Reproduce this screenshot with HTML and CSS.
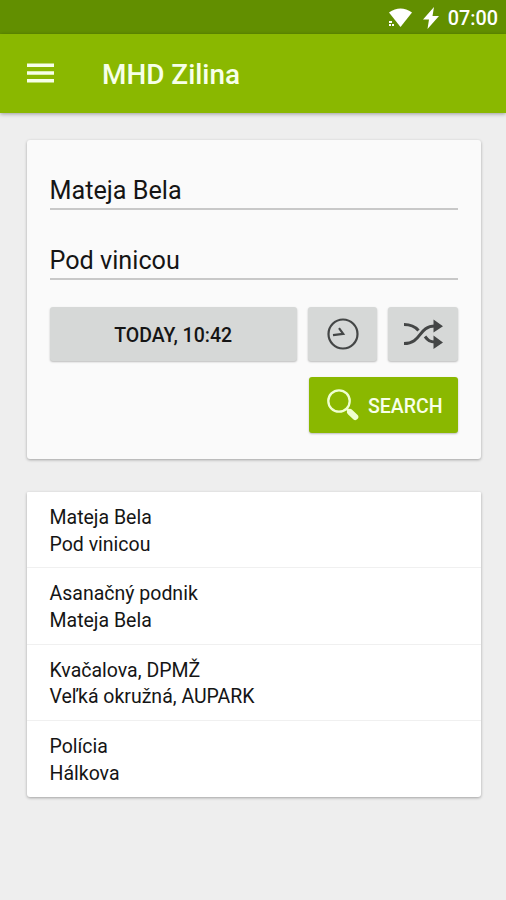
FILE: index.html
```html
<!DOCTYPE html>
<html lang="en">
<head>
<meta charset="utf-8">
<title>MHD Zilina</title>
<link rel="stylesheet" href="styles.css">
</head>
<body>
<div class="status">
  <svg class="wifi" width="26" height="20" viewBox="0 0 26 20"><path d="M1 4.5Q12.500-3.500 24 4.500L12.500 19Z" fill="#fff"/><path d="M1 13h3v2H1zM1 16h2v2H1zM4 16h2v2H4z" fill="#fff"/></svg>
  <svg class="bolt" width="16" height="22" viewBox="0 0 16 22"><path d="M11 0L0 12.500h6L4.500 22L16 9h-6.500Z" fill="#fff"/></svg>
  <span class="time">07:00</span>
</div>
<header class="bar">
  <svg class="menu" width="27" height="20" viewBox="0 0 27 20"><path d="M0 2.200h27M0 10h27M0 17.800h27" stroke="#f7ffe9" stroke-width="3.400"/></svg>
  <h1 class="title">MHD Zilina</h1>
</header>
<main class="content">
  <section class="card form">
    <div class="field">Mateja Bela</div>
    <div class="field">Pod vinicou</div>
    <div class="actions">
      <button class="btn when"><span class="label">TODAY, 10:42</span></button>
      <button class="btn" aria-label="Now">
        <svg width="32" height="32" viewBox="0 0 32 32" fill="none" stroke="#444646"><circle cx="16" cy="16" r="14.500" stroke-width="2.200"/><path d="M12 10.200L16.200 15.800L6 17.200" stroke-width="2.200"/></svg>
      </button>
      <button class="btn" aria-label="Swap">
        <svg class="swap" width="40" height="32" viewBox="0 0 40 32"><g fill="none" stroke="#444646" stroke-width="3"><path d="M1 6.500C8 6.500 12 8.500 15.500 12.500M1 25.500C19 25.500 15 8 32 8M22 18.500C25 22.500 27 24 32 24"/></g><path d="M30.500 1.500L40 8.200L30.500 14.500ZM30.500 17.500L40 24.500L30.500 31Z" fill="#444646"/></svg>
      </button>
    </div>
    <button class="btn search">
      <svg width="32" height="32" viewBox="0 0 32 32"><circle cx="12" cy="12" r="10.700" fill="none" stroke="#efffd0" stroke-width="2.300"/><path d="M19.500 19.500L23 23" stroke="#efffd0" stroke-width="2.500"/><path d="M23 23L28.300 28" stroke="#efffd0" stroke-width="6" stroke-linecap="round"/></svg>
      <span class="label">SEARCH</span>
    </button>
  </section>
  <section class="card list">
    <div class="row"><div>Mateja Bela</div><div>Pod vinicou</div></div>
    <div class="row"><div>Asanačný podnik</div><div>Mateja Bela</div></div>
    <div class="row"><div>Kvačalova, DPMŽ</div><div>Veľká okružná, AUPARK</div></div>
    <div class="row"><div>Polícia</div><div>Hálkova</div></div>
  </section>
</main>
</body>
</html>
```
FILE: styles.css
```css
* { box-sizing: border-box; }
body { margin: 0; height: 900px; background: #eee; color: #151515; font-family: Roboto, sans-serif; overflow: hidden; }
svg { display: block; flex: none; }
.status { height: 34px; background: #628f00; color: #fff; display: flex; align-items: center; justify-content: flex-end; padding: 1px 8px 0 0; }
.bolt { margin: 0 9px 0 9px; }
.time { font-size: 19.800px; font-weight: 500; line-height: 24px; padding-top: 2px; }
.bar { height: 79px; background: #8ab800; display: flex; align-items: center; padding-left: 26.500px; box-shadow: 0 1px 4px rgba(0,0,0,.35); }
.menu { margin-top: -1px; }
.title { margin: 2px 0 0 48.500px; color: #f7ffe9; font-size: 27.900px; font-weight: 500; line-height: 32px; }
.content { padding: 27px 25px 0 26.500px; }
.card { border-radius: 3px; box-shadow: 0 1px 3px rgba(0,0,0,.32); }
.form { height: 319px; background: #fafafa; padding: 0 23px; display: flex; flex-direction: column; }
.field { height: 70px; border-bottom: 2px solid #c8c8c8; padding-top: 35px; font-size: 25.200px; line-height: 32px; }
.actions { display: flex; gap: 11px; margin-top: 27px; }
.btn { height: 54px; width: 70px; border: 0; border-radius: 3px; padding: 0; background: #d6d8d7; color: #151515; font: 500 19.500px/24px Roboto, sans-serif; display: flex; align-items: center; justify-content: center; box-shadow: 0 1px 2px rgba(0,0,0,.25); }
.label { padding-top: 3px; }
.when { width: 248.500px; }
.swap { margin-left: -1px; }
.search { width: 149px; height: 56px; margin-top: 16px; align-self: flex-end; justify-content: flex-start; padding-left: 18px; gap: 9px; background: #8ab800; color: #f7ffe9; }
.list { margin-top: 32.500px; height: 305px; background: #fff; border-radius: 1px 1px 3px 3px; }
.row { height: 76.500px; padding: 13px 23px 0; font-size: 19.500px; line-height: 26.600px; }
.row:first-child { height: 75.500px; padding-top: 13.500px; }
.row + .row { border-top: 1px solid #f0f0f0; }
```
